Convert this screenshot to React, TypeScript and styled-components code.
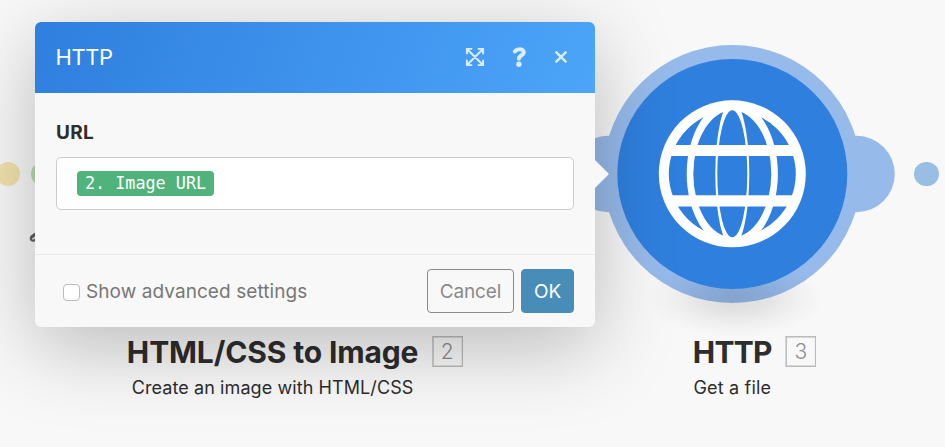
import React from "react";
import styled, { createGlobalStyle } from "styled-components";

const GlobalStyle = createGlobalStyle`
  * { box-sizing: border-box; }
  html, body { margin: 0; padding: 0; }
  body {
    background: #f8f8f8;
    font-family: Inter, "Liberation Sans", sans-serif;
    color: #2d2d2d;
  }
`;

const Canvas = styled.main`
  position: relative;
  width: 945px;
  height: 447px;
  overflow: hidden;
  background: #f8f8f8;
`;

const RouteDot = styled.span<{ $x: number; $color: string }>`
  position: absolute;
  left: ${(p) => p.$x - 12.4}px;
  top: 161.6px;
  width: 24.8px;
  height: 24.8px;
  border-radius: 50%;
  background: ${(p) => p.$color};
`;

const Wrench = styled.svg`
  position: absolute;
  left: 28px;
  top: 230px;
`;

const ModuleDrawing = styled.svg`
  position: absolute;
  left: 560px;
  top: 30px;
`;

const ModuleLabel = styled.div<{ $center: number }>`
  position: absolute;
  left: ${(p) => p.$center}px;
  top: 333px;
  transform: translateX(-50%);
  display: flex;
  flex-direction: column;
  align-items: center;
  white-space: nowrap;
`;

const ModuleTitle = styled.h2<{ $spacing: number }>`
  position: relative;
  margin: 0;
  font-size: 30px;
  line-height: 38px;
  font-weight: 700;
  letter-spacing: ${(p) => p.$spacing}px;
`;

const ModuleNumber = styled.span`
  position: absolute;
  left: calc(100% + 13.5px);
  top: 3px;
  width: 31px;
  height: 31px;
  box-shadow: inset 0 0 0 1.5px rgba(0, 0, 0, 0.25);
  color: #8c8c8c;
  font-size: 21px;
  line-height: 31px;
  font-weight: 300;
  letter-spacing: 0;
  text-align: center;
`;

const ModuleAction = styled.p<{ $spacing: number }>`
  margin: 5px 0 0;
  font-size: 18px;
  line-height: 24px;
  letter-spacing: ${(p) => p.$spacing}px;
`;

const Dialog = styled.section`
  position: absolute;
  left: 35px;
  top: 22px;
  width: 560px;
  height: 304.5px;
  display: flex;
  flex-direction: column;
  border-radius: 6px;
  background: #f8f8f8;
  box-shadow: 0 20px 80px rgba(0, 0, 0, 0.25);
`;

const Pointer = styled.span`
  position: absolute;
  left: 100%;
  top: 138px;
  border: 14px solid transparent;
  border-right-width: 0;
  border-left-color: #f8f8f8;
`;

const DialogHeader = styled.header`
  display: flex;
  align-items: center;
  justify-content: space-between;
  height: 70.5px;
  padding: 0 27.5px 0 20.5px;
  border-radius: 6px 6px 0 0;
  background: linear-gradient(110deg, #2f7fde, #4ca5f9);
  color: #fff;
`;

const DialogTitle = styled.h1`
  margin: 0;
  font-size: 22px;
  line-height: 30px;
  font-weight: 400;
  letter-spacing: -0.4px;
`;

const HeaderActions = styled.div`
  display: flex;
  align-items: center;
`;

const IconButton = styled.button<{ $gap?: number }>`
  display: flex;
  margin: 0 0 0 ${(p) => p.$gap ?? 0}px;
  padding: 0;
  border: 0;
  background: none;
  color: #dcecfd;
`;

const DialogBody = styled.div`
  flex: 1;
  padding: 28px 21px 0;
`;

const FieldLabel = styled.label`
  display: block;
  font-size: 19px;
  line-height: 24px;
  font-weight: 650;
  letter-spacing: 0.3px;
`;

const Field = styled.div`
  display: flex;
  align-items: center;
  height: 53px;
  margin-top: 12px;
  padding-left: 20px;
  border: 1px solid #cbcbcb;
  border-radius: 5px;
  background: #fff;
`;

const Token = styled.span`
  height: 25px;
  width: 137px;
  text-align: center;
  border-radius: 4px;
  background: #50b37c;
  color: #fff;
  font: 16.8px/24px "DejaVu Sans Mono", monospace;
`;

const DialogFooter = styled.footer`
  display: flex;
  align-items: center;
  height: 72.5px;
  padding: 0 21px 0 28px;
  border-top: 1px solid #e9e9e9;
`;

const Advanced = styled.label`
  display: flex;
  align-items: center;
  flex: 1;
  gap: 6px;
  padding-top: 2px;
  color: #777;
  font-size: 19px;
  line-height: 24px;
  letter-spacing: 0.07px;
`;

const Checkbox = styled.span`
  width: 17px;
  height: 17px;
  margin-top: 2px;
  border: 1px solid #bababa;
  border-radius: 4px;
  background: #fff;
`;

const Button = styled.button<{ $primary?: boolean }>`
  width: ${(p) => (p.$primary ? 53 : 87)}px;
  height: 44px;
  margin-left: ${(p) => (p.$primary ? 7 : 0)}px;
  padding: 2px 0 0;
  border: 1px solid ${(p) => (p.$primary ? "#488cb8" : "#8a8a8a")};
  border-radius: 4px;
  background: ${(p) => (p.$primary ? "#488cb8" : "transparent")};
  color: ${(p) => (p.$primary ? "#fff" : "#8a8a8a")};
  font: 400 19px/24px Inter, sans-serif;
  letter-spacing: -0.15px;
`;

const ExpandIcon = () => (
  <svg width="20" height="20" viewBox="0 0 20 20" fill="none" stroke="currentColor" strokeWidth="1.9">
    <path d="M2 2 18 18M18 2 2 18M1.9 7.2V1.9H7.2M12.8 1.9h5.3v5.3M18.1 12.8v5.3h-5.3M7.2 18.1H1.9v-5.3" />
  </svg>
);

const HelpIcon = () => (
  <svg width="15" height="20" viewBox="0 0 15 20">
    <path
      d="M2.9 4.4C4.2 2.9 5.8 2.3 7.6 2.3c2.400 0 4.200 1.200 4.200 3.200 0 2.800-4.900 2.900-4.900 6.300"
      fill="none"
      stroke="currentColor"
      strokeWidth="4.1"
      strokeLinecap="round"
      strokeLinejoin="round"
    />
    <circle cx="6.9" cy="17.2" r="2.7" fill="currentColor" />
  </svg>
);

const CloseIcon = () => (
  <svg width="14" height="14" viewBox="0 0 14 14" stroke="currentColor" strokeWidth="2.4" strokeLinecap="round">
    <path d="M2.3 2.3l9.4 9.4M11.7 2.3l-9.4 9.4" />
  </svg>
);

const GlobeModule = () => (
  <ModuleDrawing width="350" height="320" viewBox="560 30 350 320">
    <defs>
      <radialGradient id="ground">
        <stop offset="0" stopColor="#000" stopOpacity=".12" />
        <stop offset=".35" stopColor="#000" stopOpacity=".085" />
        <stop offset=".7" stopColor="#000" stopOpacity=".03" />
        <stop offset="1" stopColor="#000" stopOpacity="0" />
      </radialGradient>
      <clipPath id="globe">
        <circle cx="732.3" cy="173.8" r="72" />
      </clipPath>
    </defs>
    <g fill="#96baea">
      <circle cx="608" cy="174" r="38.2" />
      <circle cx="856.6" cy="174" r="38.2" />
      <circle cx="732.3" cy="174" r="129" />
    </g>
    <ellipse cx="735" cy="298" rx="90" ry="40" fill="url(#ground)" />
    <circle cx="732.3" cy="174" r="115" fill="#2f7fde" />
    <circle cx="732.3" cy="173.8" r="73.5" fill="#fff" />
    <circle cx="732.3" cy="173.8" r="63.5" fill="#2f7fde" />
    <ellipse cx="732.3" cy="173.8" rx="45.6" ry="73" fill="#fff" />
    <ellipse cx="732.3" cy="173.8" rx="39" ry="63.5" fill="#2f7fde" />
    <ellipse cx="732.3" cy="173.8" rx="17" ry="73" fill="#fff" />
    <ellipse cx="732.3" cy="173.8" rx="15" ry="63.5" fill="#2f7fde" />
    <path d="M655 145h155v11H655zM655 195.2h155v11.2H655z" fill="#fff" clipPath="url(#globe)" />
  </ModuleDrawing>
);

export default function App() {
  return (
    <>
      <GlobalStyle />
      <Canvas>
        <RouteDot $x={8} $color="#f0e2ad" />
        <RouteDot $x={43.2} $color="#b9dbab" />
        <RouteDot $x={926.7} $color="#98bee3" />
        <Wrench width="14" height="14" viewBox="0 0 14 14" fill="none" stroke="#606060" strokeWidth="2.2">
          <path d="M9 2.6C6 4.6 3.2 6 2.8 8.2c-.2 1.6 1 2.5 2.4 2.5 1.5 0 2.3-1 2.3-2.1" />
          <path d="M3 7.5 8 4" strokeWidth="3" />
        </Wrench>

        <GlobeModule />

        <ModuleLabel $center={272.6}>
          <ModuleTitle $spacing={-0.14}>
            HTML/CSS to Image
            <ModuleNumber>2</ModuleNumber>
          </ModuleTitle>
          <ModuleAction $spacing={0.09}>Create an image with HTML/CSS</ModuleAction>
        </ModuleLabel>
        <ModuleLabel $center={732.3}>
          <ModuleTitle $spacing={-0.7}>
            HTTP
            <ModuleNumber>3</ModuleNumber>
          </ModuleTitle>
          <ModuleAction $spacing={0.18}>Get a file</ModuleAction>
        </ModuleLabel>

        <Dialog>
          <Pointer />
          <DialogHeader>
            <DialogTitle>HTTP</DialogTitle>
            <HeaderActions>
              <IconButton aria-label="Expand"><ExpandIcon /></IconButton>
              <IconButton aria-label="Help" $gap={27}><HelpIcon /></IconButton>
              <IconButton aria-label="Close" $gap={27}><CloseIcon /></IconButton>
            </HeaderActions>
          </DialogHeader>
          <DialogBody>
            <FieldLabel>URL</FieldLabel>
            <Field>
              <Token>2. Image URL</Token>
            </Field>
          </DialogBody>
          <DialogFooter>
            <Advanced>
              <Checkbox />
              Show advanced settings
            </Advanced>
            <Button>Cancel</Button>
            <Button $primary>OK</Button>
          </DialogFooter>
        </Dialog>
      </Canvas>
    </>
  );
}
